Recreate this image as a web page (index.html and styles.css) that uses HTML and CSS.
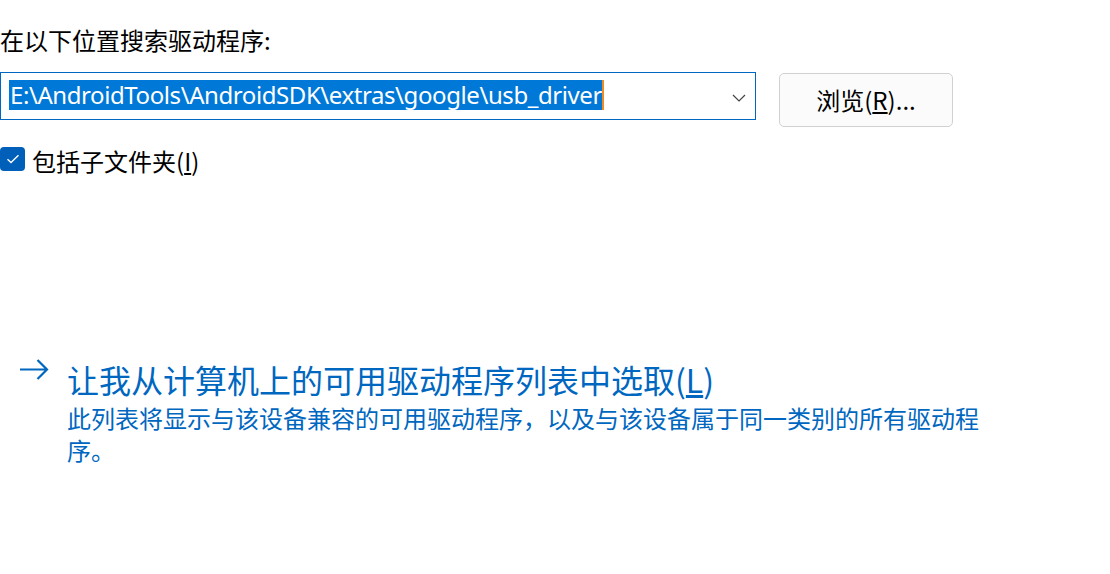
FILE: index.html
```html
<!DOCTYPE html>
<html lang="zh-CN">
<head>
<meta charset="utf-8">
<title>搜索驱动程序</title>
<link rel="stylesheet" href="styles.css">
</head>
<body>
<div class="page">
  <div class="heading">在以下位置搜索驱动程序:</div>
  <div class="path-row">
    <div class="combo">
      <span class="sel">E:\AndroidTools\AndroidSDK\extras\google\usb_driver</span><span class="caret"></span>
      <svg class="chev" width="14" height="8" viewBox="0 0 14 8"><path d="M1 1 L7 7 L13 1" fill="none" stroke="#444" stroke-width="1.2"/></svg>
    </div>
    <button class="browse">浏览(<u>R</u>)...</button>
  </div>
  <label class="check-row">
    <span class="box"><svg width="14" height="10" viewBox="0 0 14 10"><path d="M1.5 5.2 L5 8.6 L12.5 1.2" fill="none" stroke="#fff" stroke-width="1.4"/></svg></span>
    <span class="check-label">包括子文件夹(<u>I</u>)</span>
  </label>
  <div class="link-block">
    <svg class="arrow" width="30" height="21" viewBox="0 0 30 21"><path d="M1 10.5 H28 M18.5 1 L28 10.5 L18.5 20" fill="none" stroke="#0067c0" stroke-width="2.2"/></svg>
    <div class="link-text">
      <div class="link-title">让我从计算机上的可用驱动程序列表中选取(<u>L</u>)</div>
      <div class="link-desc">此列表将显示与该设备兼容的可用驱动程序，以及与该设备属于同一类别的所有驱动程序。</div>
    </div>
  </div>
</div>
</body>
</html>
```
FILE: styles.css
```css
html, body {
  margin: 0;
  padding: 0;
  background: #ffffff;
}
body {
  font-family: "Noto Sans", "Noto Sans CJK SC", sans-serif;
  color: #1a1a1a;
  width: 1110px;
  height: 574px;
  overflow: hidden;
}
.page {
  padding-top: 24px;
}
.heading {
  font-family: "Noto Sans CJK SC", sans-serif;
  font-size: 24px;
  line-height: 32px;
  height: 32px;
  color: #000;
}
.path-row {
  display: flex;
  align-items: flex-start;
  margin-top: 16px;
}
.combo {
  position: relative;
  box-sizing: border-box;
  width: 756px;
  height: 48px;
  border: 1px solid #0067c0;
  padding: 7px 0 0 8px;
  display: flex;
  align-items: flex-start;
}
.sel {
  background: #0078d7;
  color: #fff;
  font-family: "Noto Sans", sans-serif;
  font-size: 24px;
  line-height: 30px;
  height: 30px;
  letter-spacing: -0.42px;
  white-space: nowrap;
  padding-left: 1px;
}
.caret {
  width: 2px;
  height: 30px;
  background: #f08a24;
}
.chev {
  position: absolute;
  right: 9px;
  top: 21px;
}
.browse {
  box-sizing: border-box;
  margin: 1px 0 0 23px;
  width: 174px;
  height: 54px;
  border: 1px solid #d1d1d1;
  border-radius: 5px;
  background: #fbfbfb;
  font-family: "Noto Sans CJK SC", sans-serif;
  font-size: 24px;
  color: #000;
  padding: 0;
  line-height: 30px;
}
.check-row {
  display: flex;
  align-items: center;
  margin-top: 19px;
  height: 26px;
}
.box {
  box-sizing: border-box;
  width: 25px;
  height: 24px;
  border-radius: 4px;
  background: #005fb8;
  display: flex;
  align-items: center;
  justify-content: center;
}
.check-label {
  margin-left: 7px;
  font-family: "Noto Sans CJK SC", sans-serif;
  font-size: 24px;
  line-height: 30px;
  color: #000;
  position: relative;
  top: 2px;
}
.link-block {
  display: flex;
  align-items: flex-start;
  margin-top: 187px;
  padding-left: 19px;
  color: #0067c0;
}
.arrow {
  margin-top: 0;
  flex: none;
}
.link-text {
  margin-left: 18px;
  font-family: "Noto Sans CJK SC", sans-serif;
}
.link-title {
  font-size: 32px;
  line-height: 40px;
}
.link-desc {
  margin-top: 3px;
  font-size: 24px;
  line-height: 32px;
  width: 920px;
}
```
